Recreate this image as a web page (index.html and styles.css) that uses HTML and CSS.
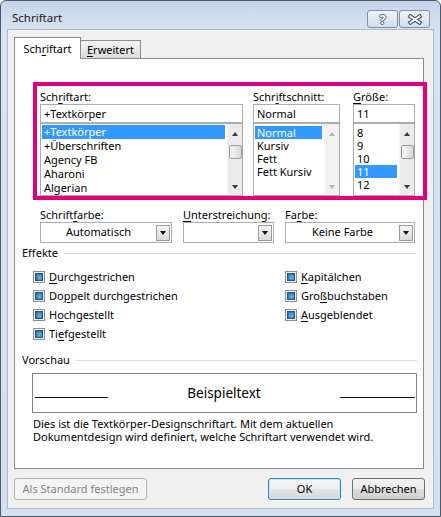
FILE: index.html
```html
<!DOCTYPE html>
<html lang="de">
<head>
<meta charset="utf-8">
<title>Schriftart</title>
<link rel="stylesheet" href="styles.css">
</head>
<body>
<div class="window">

<div class="titlebar">
	<span class="wtitle">Schriftart</span>
	<span class="capbtn help">?</span>
	<span class="capbtn close">
		<svg width="16" height="11" viewBox="0 0 16 11">
			<path d="M3.5 2.5 L12.5 8.5 M12.5 2.5 L3.5 8.5" stroke="#46546a" stroke-width="4.2" stroke-linecap="square" fill="none"/>
			<path d="M3.5 2.5 L12.5 8.5 M12.5 2.5 L3.5 8.5" stroke="#f4f7fb" stroke-width="2" stroke-linecap="square" fill="none"/>
		</svg>
	</span>
</div>

<div class="client">
	<div class="tabs">
		<div class="tab active">Sch<u>r</u>iftart</div>
		<div class="tab"><u>E</u>rweitert</div>
	</div>

	<div class="panel">
		<div class="fontbox">
			<div class="fcol c1">
				<div class="lbl">Sch<u>r</u>iftart:</div>
				<div class="edit">+Textkörper</div>
				<div class="list">
					<div class="items">
						<div class="item sel">+Textkörper</div>
						<div class="item">+Überschriften</div>
						<div class="item">Agency FB</div>
						<div class="item">Aharoni</div>
						<div class="item">Algerian</div>
					</div>
					<div class="sb">
						<span class="up"></span>
						<span class="thumb"></span>
						<span class="down"></span>
					</div>
				</div>
			</div>
			<div class="fcol c2">
				<div class="lbl">Schr<u>i</u>ftschnitt:</div>
				<div class="edit">Normal</div>
				<div class="list">
					<div class="items">
						<div class="item sel">Normal</div>
						<div class="item">Kursiv</div>
						<div class="item">Fett</div>
						<div class="item">Fett Kursiv</div>
					</div>
					<div class="sb off">
						<span class="up"></span>
						<span class="down"></span>
					</div>
				</div>
			</div>
			<div class="fcol c3">
				<div class="lbl"><u>G</u>röße:</div>
				<div class="edit">11</div>
				<div class="list">
					<div class="items">
						<div class="item">8</div>
						<div class="item">9</div>
						<div class="item">10</div>
						<div class="item sel">11</div>
						<div class="item">12</div>
					</div>
					<div class="sb">
						<span class="up"></span>
						<span class="thumb"></span>
						<span class="down"></span>
					</div>
				</div>
			</div>
		</div>

		<div class="fmt">
			<div class="fmtcol w1">
				<div class="lbl">Schrift<u>f</u>arbe:</div>
				<div class="combo"><span class="val">Automatisch</span><span class="dd"></span></div>
			</div>
			<div class="fmtcol w2">
				<div class="lbl"><u>U</u>nterstreichung:</div>
				<div class="combo"><span class="val"></span><span class="dd"></span></div>
			</div>
			<div class="fmtcol w3">
				<div class="lbl">Fa<u>r</u>be:</div>
				<div class="combo"><span class="val">Keine Farbe</span><span class="dd"></span></div>
			</div>
		</div>

		<div class="grp">Effekte</div>
		<div class="fx">
			<div class="chk"><span class="cb"></span><u>D</u>urchgestrichen</div>
			<div class="chk"><span class="cb"></span><u>K</u>apitälchen</div>
			<div class="chk"><span class="cb"></span>Do<u>p</u>pelt durchgestrichen</div>
			<div class="chk"><span class="cb"></span>Gro<u>ß</u>buchstaben</div>
			<div class="chk"><span class="cb"></span>H<u>o</u>chgestellt</div>
			<div class="chk"><span class="cb"></span><u>A</u>usgeblendet</div>
			<div class="chk"><span class="cb"></span>Ti<u>e</u>fgestellt</div>
		</div>

		<div class="grp vs">Vorschau</div>
		<div class="preview">
			<span class="pline"></span>
			<span class="ptext">Beispieltext</span>
			<span class="pline right"></span>
		</div>
		<div class="desc">Dies ist die Textkörper-Designschriftart. Mit dem aktuellen<br>Dokumentdesign wird definiert, welche Schriftart verwendet wird.</div>
	</div>

	<div class="foot">
		<div class="btn dis">Als Standard festlegen</div>
		<div class="btn ok">OK</div>
		<div class="btn cancel">Abbrechen</div>
	</div>
</div>

</div>
</body>
</html>
```

FILE: styles.css
```css
body {
	margin: 0;
	background: #fff;
	font-family: "Noto Sans", sans-serif;
	font-size: 11px;
	color: #000;
}
u {
	text-decoration-thickness: 1px;
	text-underline-offset: 2px;
}

.window {
	width: 441px;
	height: 517px;
	box-sizing: border-box;
	border: 1px solid #4d5869;
	border-radius: 6px 6px 0 0;
	background: linear-gradient(#c5d5ea, #d7e3f1 30px, #d3dfee);
}

.titlebar {
	height: 29px;
	display: flex;
	align-items: flex-start;
	padding: 0 10px 0 11px;
}
.wtitle {
	flex: 1;
	margin-top: 9px;
	line-height: 16px;
	font-size: 11.5px;
	color: #1c1c1c;
}
.capbtn {
	margin-top: 9px;
	width: 31px;
	height: 18px;
	box-sizing: border-box;
	border: 1px solid #8190a6;
	border-radius: 3px;
	background: linear-gradient(#eef3fa, #d2deed);
	display: flex;
	align-items: center;
	justify-content: center;
}
.help {
	margin-right: 1px;
	font-weight: bold;
	font-size: 13px;
	line-height: 16px;
	color: #f6f8fb;
	text-shadow: 1px 0 0 #56647a, -1px 0 0 #56647a, 0 1px 0 #56647a, 0 -1px 0 #56647a;
}

.client {
	margin: 0 7px;
	height: 478px;
	box-sizing: border-box;
	padding: 7px 8px 0 6px;
	background: #f0f0f0;
	box-shadow: 0 0 0 1px #adbbce;
}

.tabs {
	display: flex;
	align-items: flex-end;
	height: 21px;
}
.tab {
	box-sizing: border-box;
	width: 60px;
	height: 18px;
	border: 1px solid #898c95;
	border-left: 0;
	border-bottom: 0;
	background: linear-gradient(#f4f4f4, #dcdcdc);
	text-align: center;
	line-height: 17px;
}
.tab.active {
	width: 67px;
	height: 22px;
	margin-bottom: -1px;
	border-left: 1px solid #898c95;
	background: #fff;
	line-height: 22px;
	position: relative;
	z-index: 1;
}

.panel {
	width: 410px;
	height: 411px;
	box-sizing: border-box;
	border: 1px solid #898c95;
	background: #fff;
}

.fontbox {
	margin: 23px 0 0 18px;
	width: 394px;
	height: 118px;
	box-sizing: border-box;
	border: 4px solid #e2007a;
	padding: 3px 0 0 3px;
	display: flex;
	position: relative;
}
.c1 {
	width: 203px;
}
.c2 {
	width: 87px;
	margin-left: 10px;
}
.c3 {
	width: 62px;
	margin-left: 13px;
}
.lbl {
	height: 15px;
	line-height: 15px;
	white-space: nowrap;
}
.edit {
	height: 19px;
	box-sizing: border-box;
	border: 1px solid #abadb3;
	padding-left: 3px;
	line-height: 17px;
}
.list {
	height: 73px;
	box-sizing: border-box;
	border: 1px solid #abadb3;
	display: flex;
}
.items {
	flex: 1;
	padding: 1px 2px 0 1px;
	overflow: hidden;
}
.item {
	height: 14px;
	line-height: 14px;
	padding-left: 2px;
	white-space: nowrap;
}
.c2 .items, .c3 .items {
	padding-top: 2px;
}
.c2 .item, .c3 .item {
	height: 13px;
	line-height: 13px;
}
.item.sel {
	background: #3399ff;
	color: #fff;
}

.sb {
	width: 15px;
	box-sizing: border-box;
	padding: 8px 0 6px;
	background: #ebebeb;
	border-left: 1px solid #f5f5f5;
	display: flex;
	flex-direction: column;
	align-items: center;
}
.sb .up {
	width: 0;
	height: 0;
	border-left: 3.5px solid transparent;
	border-right: 3.5px solid transparent;
	border-bottom: 4px solid #3a3a3a;
}
.sb .down {
	margin-top: auto;
	width: 0;
	height: 0;
	border-left: 3.5px solid transparent;
	border-right: 3.5px solid transparent;
	border-top: 4px solid #3a3a3a;
}
.sb .thumb {
	margin-top: 9px;
	width: 13px;
	height: 14px;
	box-sizing: border-box;
	border: 1px solid #9b9b9b;
	border-radius: 2px;
	background: linear-gradient(to right, #f6f6f6, #dadada);
}
.sb.off {
	background: #f1f1f1;
}
.sb.off .up {
	border-bottom-color: #b4b4b4;
}
.sb.off .down {
	border-top-color: #b4b4b4;
}

.fmt {
	display: flex;
	margin: 8px 0 0 25px;
}
.fmtcol .lbl {
	height: 14px;
	line-height: 14px;
}
.w1 {
	width: 132px;
}
.w2 {
	width: 91px;
	margin-left: 11px;
}
.w3 {
	width: 130px;
	margin-left: 11px;
}
.combo {
	height: 21px;
	box-sizing: border-box;
	border: 1px solid #abadb3;
	background: #fff;
	display: flex;
	align-items: flex-end;
	padding: 0 1px 1px 0;
}
.combo .val {
	flex: 1;
	align-self: center;
	text-align: center;
	line-height: 16px;
}
.combo .dd {
	width: 14px;
	height: 16px;
	box-sizing: border-box;
	border: 1px solid #999;
	background: linear-gradient(#f7f7f7, #d9d9d9);
	display: flex;
	align-items: center;
	justify-content: center;
}
.combo .dd::after {
	content: "";
	width: 0;
	height: 0;
	border-left: 3.5px solid transparent;
	border-right: 3.5px solid transparent;
	border-top: 4px solid #111;
}

.grp {
	display: flex;
	align-items: center;
	margin: 3px 6px 0 7px;
	line-height: 14px;
}
.grp::after {
	content: "";
	flex: 1;
	margin-left: 6px;
	border-top: 1px solid #d5dfe5;
}
.grp.vs {
	margin-top: 10px;
}

.fx {
	display: grid;
	grid-template-columns: 252px auto;
	grid-auto-rows: 19px;
	margin: 7px 0 0 18px;
}
.chk {
	display: flex;
	align-items: center;
	white-space: nowrap;
}
.cb {
	width: 12px;
	height: 12px;
	box-sizing: border-box;
	margin-right: 4px;
	border: 1px solid #8e8f8f;
	background: #f4f4f4;
	padding: 1px;
}
.cb::before {
	content: "";
	display: block;
	width: 8px;
	height: 8px;
	box-sizing: border-box;
	border: 1px solid #22557f;
	background: radial-gradient(circle at 60% 60%, #62b7ea, #2f74ab 80%);
}

.preview {
	margin: 6px 6px 0 17px;
	height: 40px;
	box-sizing: border-box;
	border: 1px solid #7f848c;
	padding: 0 1px 0 2px;
	display: flex;
	align-items: flex-start;
}
.pline {
	width: 73px;
	height: 23px;
	border-bottom: 1px solid #111;
}
.pline.right {
	width: 75px;
}
.ptext {
	flex: 1;
	margin-top: 10px;
	text-align: center;
	font-size: 13.5px;
	line-height: 18px;
}
.desc {
	margin: 4px 0 0 18px;
	line-height: 13px;
	white-space: nowrap;
}

.foot {
	display: flex;
	margin-top: 9px;
}
.btn {
	width: 73px;
	height: 22px;
	box-sizing: border-box;
	border: 1px solid #707070;
	border-radius: 3px;
	background: linear-gradient(#f2f2f2, #ebebeb 50%, #dddddd 51%, #cfcfcf);
	text-align: center;
	line-height: 20px;
}
.btn.dis {
	width: 133px;
	border-color: #adb2b5;
	background: #f4f4f4;
	color: #838383;
}
.btn.ok {
	margin-left: auto;
	border-color: #3c7fb1;
	box-shadow: inset 0 0 0 1px #c4e6f8;
	background: linear-gradient(#f4f6f8, #eceff1 50%, #e0e3e6 51%, #d4d8dc);
}
.btn.cancel {
	margin-left: 11px;
}
```
